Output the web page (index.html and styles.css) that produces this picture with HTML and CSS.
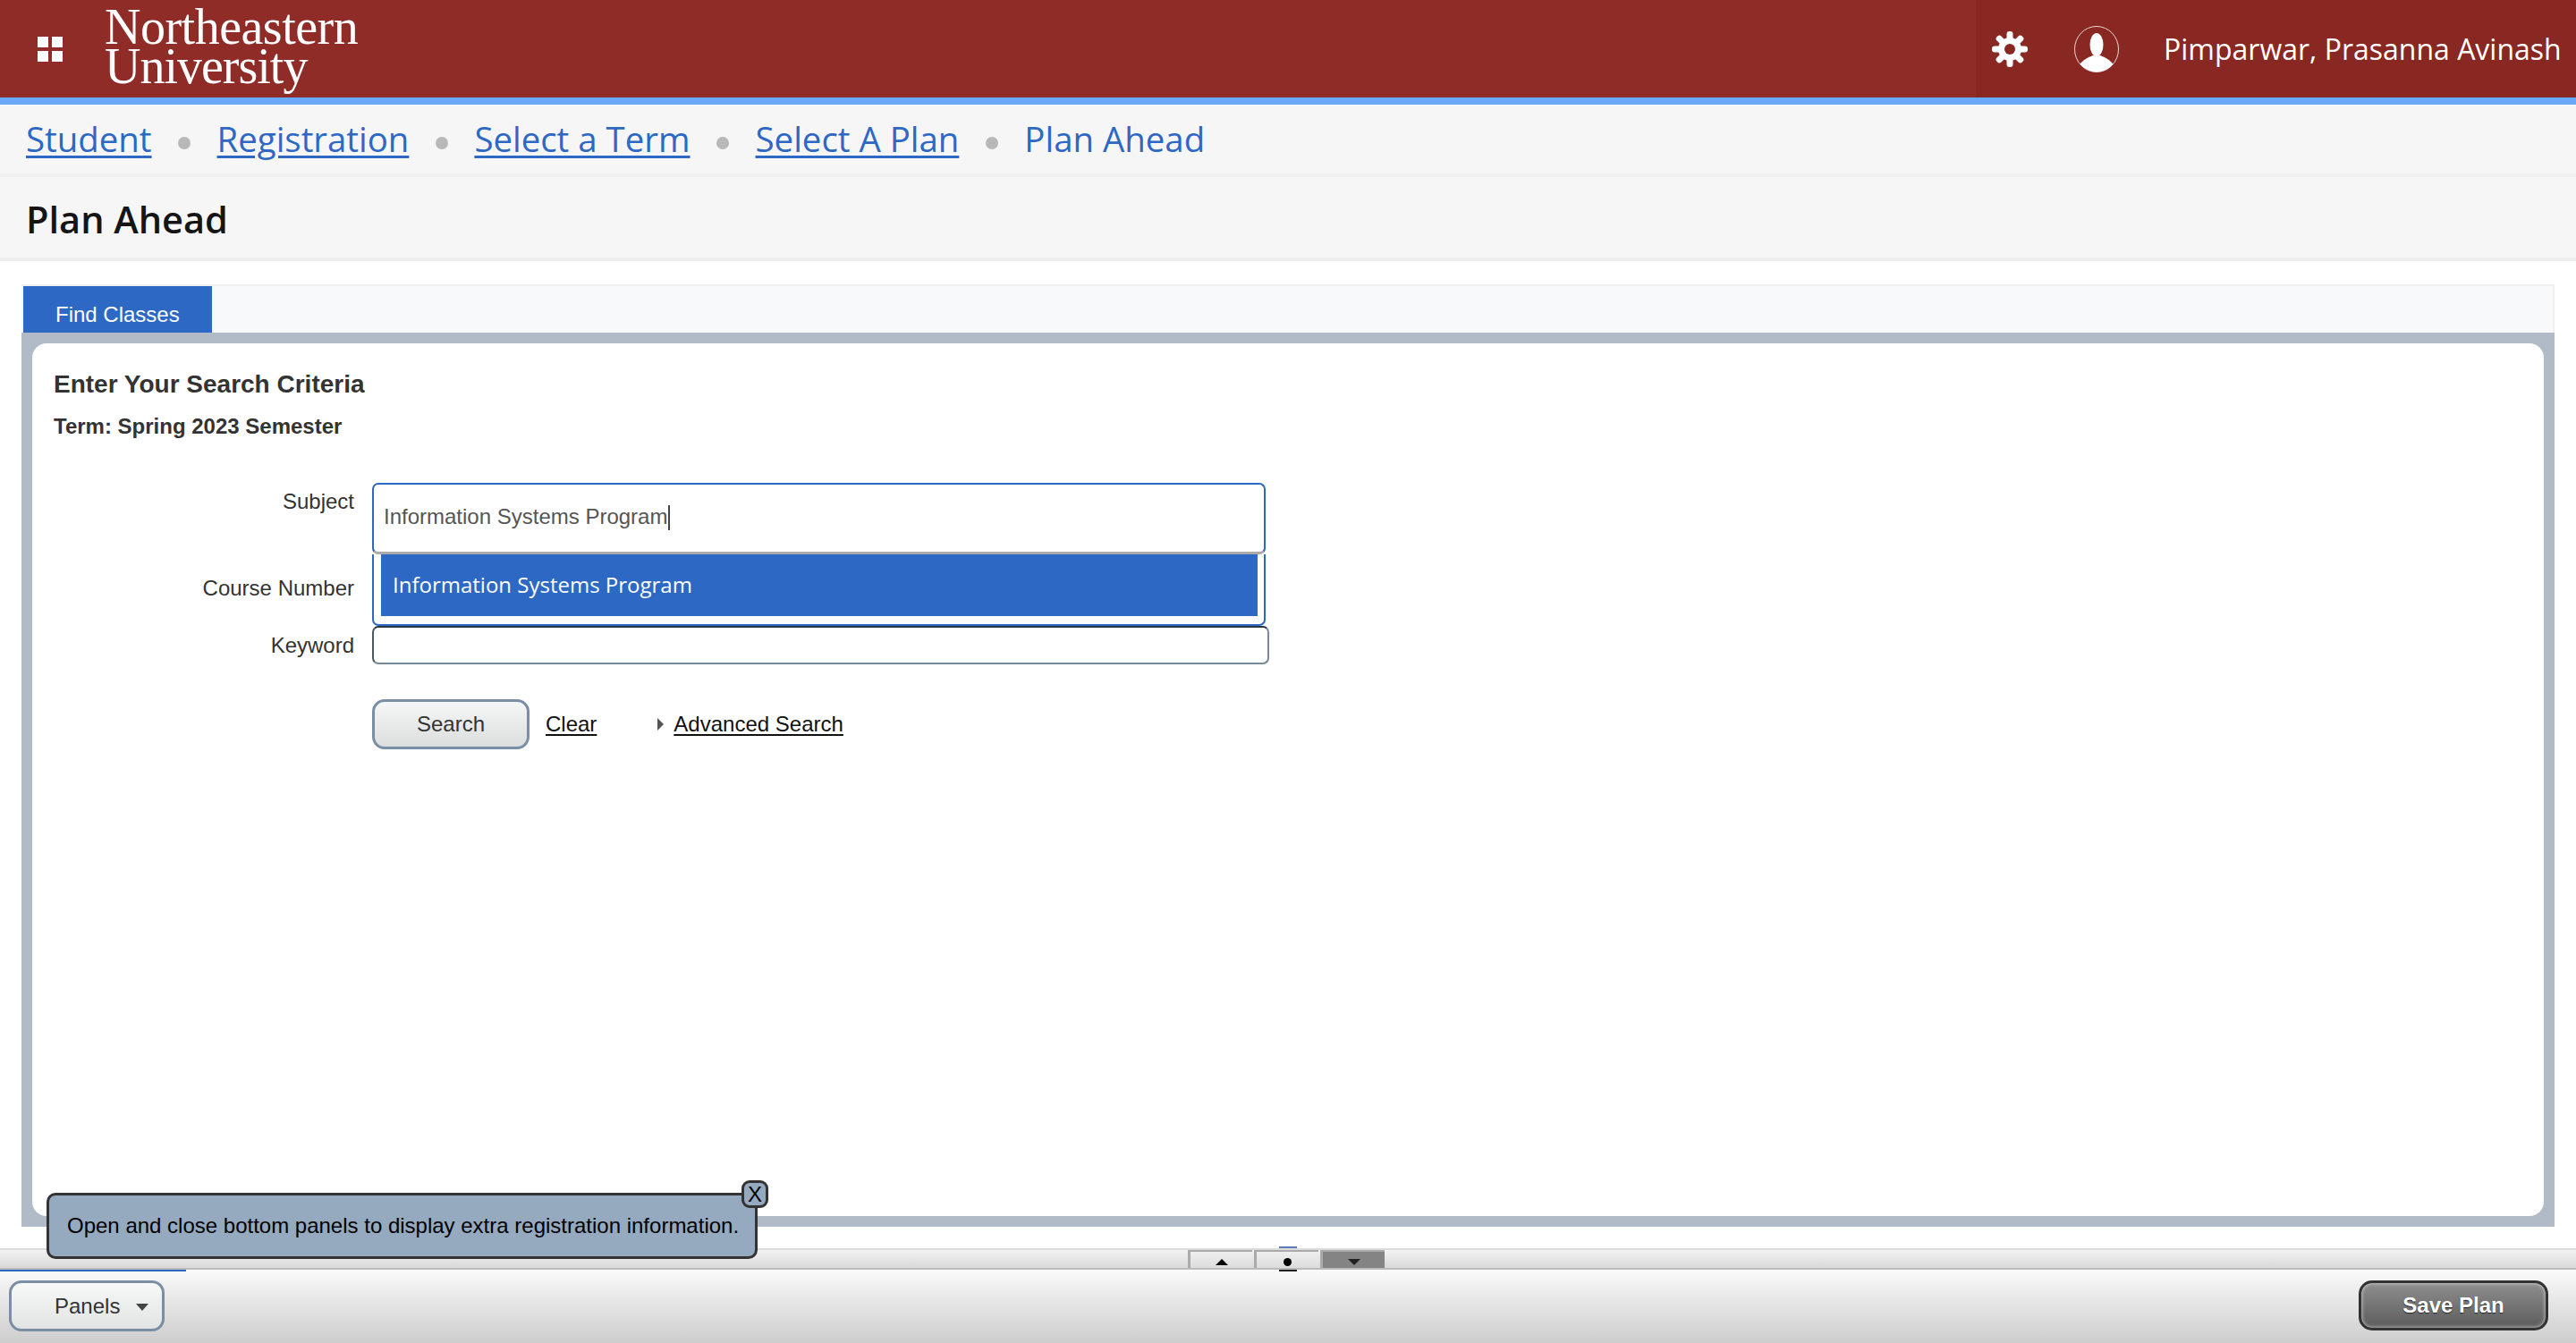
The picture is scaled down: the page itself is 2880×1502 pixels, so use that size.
FILE: index.html
```html
<!DOCTYPE html>
<html lang="en">
<head>
<meta charset="utf-8">
<title>Plan Ahead</title>
<link rel="stylesheet" href="styles.css">
</head>
<body>
<div class="page">
  <header class="topbar">
    <div class="brand">
      <svg class="grid-icon" viewBox="0 0 28 28" width="28" height="28" aria-hidden="true">
        <rect x="0" y="0" width="12" height="12"/><rect x="16" y="0" width="12" height="12"/>
        <rect x="0" y="16" width="12" height="12"/><rect x="16" y="16" width="12" height="12"/>
      </svg>
      <div class="logo"><span class="logo-first">Northeastern</span><span class="logo-second">University</span></div>
    </div>
    <div class="user">
      <svg class="gear" viewBox="0 0 40 40" width="40" height="40" aria-hidden="true">
        <g fill="#fff">
          <rect x="16.5" y="0" width="7" height="40" rx="3"/>
          <rect x="16.5" y="0" width="7" height="40" rx="3" transform="rotate(45 20 20)"/>
          <rect x="16.5" y="0" width="7" height="40" rx="3" transform="rotate(90 20 20)"/>
          <rect x="16.5" y="0" width="7" height="40" rx="3" transform="rotate(135 20 20)"/>
          <circle cx="20" cy="20" r="13"/>
        </g>
        <circle cx="20" cy="20" r="6" fill="#892722"/>
      </svg>
      <svg class="avatar" viewBox="0 0 50 52" width="50" height="52" aria-hidden="true">
        <defs><clipPath id="av"><ellipse cx="25" cy="26" rx="24.5" ry="25.5"/></clipPath></defs>
        <ellipse cx="25" cy="26" rx="24.5" ry="25.5" fill="none" stroke="#e8d6d4" stroke-width="1"/>
        <g clip-path="url(#av)" fill="#fff">
          <ellipse cx="25" cy="21" rx="7.5" ry="13"/>
          <path d="M4 52C4 40 14 36 21 33h8c7 3 17 7 17 19z"/>
        </g>
      </svg>
      <span class="user-name">Pimparwar, Prasanna Avinash</span>
    </div>
  </header>

  <nav class="crumbs">
    <a class="crumb" href="#">Student</a><i class="dot"></i>
    <a class="crumb" href="#">Registration</a><i class="dot"></i>
    <a class="crumb" href="#">Select a Term</a><i class="dot"></i>
    <a class="crumb" href="#">Select A Plan</a><i class="dot"></i>
    <span class="crumb-current">Plan Ahead</span>
  </nav>

  <div class="title-bar"><h1 class="title">Plan Ahead</h1></div>

  <main class="content">
    <div class="tabs"><div class="tab">Find Classes</div></div>
    <section class="frame">
      <div class="card">
        <h2 class="card-title">Enter Your Search Criteria</h2>
        <p class="term">Term: Spring 2023 Semester</p>
        <div class="form">
          <div class="row row-subject">
            <label class="label">Subject</label>
            <div class="combo">
              <div class="combo-input">Information Systems Program<span class="caret"></span></div>
              <div class="combo-list"><div class="combo-item">Information Systems Program</div></div>
            </div>
          </div>
          <div class="row row-course">
            <label class="label">Course Number</label>
          </div>
          <div class="row row-keyword">
            <label class="label">Keyword</label>
            <div class="field"></div>
          </div>
          <div class="row row-actions">
            <span class="label"></span>
            <button class="btn-search" type="button">Search</button>
            <a class="link link-clear" href="#">Clear</a>
            <span class="arrow"></span>
            <a class="link" href="#">Advanced Search</a>
          </div>
        </div>
      </div>
    </section>
  </main>

  <div class="panel-bar">
    <div class="toggles">
      <span class="toggle"><i class="tri-up"></i></span>
      <span class="toggle"><i class="round"></i></span>
      <span class="toggle toggle-active"><i class="tri-down"></i></span>
    </div>
    <i class="mark-top"></i>
    <i class="mark-bottom"></i>
    <i class="progress"></i>
  </div>

  <footer class="footer">
    <button class="btn-panels" type="button">Panels<i class="panels-arrow"></i></button>
    <button class="btn-save" type="button">Save Plan</button>
  </footer>

  <div class="tip">
    Open and close bottom panels to display extra registration information.
    <span class="tip-close">X</span>
  </div>
</div>
</body>
</html>
```

FILE: styles.css
```css
* { box-sizing: border-box; }
html, body { margin: 0; height: 100%; }
body { font-family: "Liberation Sans", Arial, sans-serif; color: #333; background: #fff; }
.page { position: relative; height: 1502px; display: flex; flex-direction: column; overflow: hidden; }

.topbar {
  height: 117px; flex: none; display: flex; justify-content: space-between;
  background: #8f2c28; border-bottom: 8px solid #6aa9f8;
}
.brand { display: flex; align-items: center; }
.grid-icon { fill: #fff; margin-left: 42px; margin-top: 1px; }
.logo {
  display: flex; flex-direction: column; margin-left: 47px; margin-top: -6px;
  font-family: "Liberation Serif", "Times New Roman", serif; font-size: 56px; line-height: 44px;
  color: #fff; letter-spacing: -0.5px;
}
.logo-second { letter-spacing: -1px; }
.user { width: 671px; display: flex; align-items: center; background: #892722; }
.gear { margin-left: 18px; }
.avatar { margin-left: 52px; }
.user-name { margin-left: 50px; font-family: "Open Sans", sans-serif; font-size: 32px; color: #fff; white-space: nowrap; }

.crumbs {
  height: 81px; flex: none; display: flex; align-items: center; gap: 29.5px;
  padding: 0 0 2px 29px; background: #f6f6f6; border-bottom: 4px solid #efefef;
  font-family: "Open Sans", sans-serif; font-size: 38.4px;
}
.crumb { color: #2d68c4; text-decoration: underline; text-decoration-thickness: 3px; text-underline-offset: 4px; white-space: nowrap; }
.crumb-current { color: #2d68c4; white-space: nowrap; }
.dot { width: 14px; height: 14px; margin-top: 10px; border-radius: 50%; background: #b8b8b8; }

.title-bar { height: 94px; flex: none; display: flex; align-items: center; padding: 4px 0 0 29px; background: #f6f6f6; border-bottom: 4px solid #efefef; }
.title { margin: 0; font-family: "Open Sans", sans-serif; font-size: 41.5px; font-weight: 600; color: #151515; }

.content { flex: 1; padding: 26px 24px 24px; display: flex; flex-direction: column; min-height: 0; }
.tabs { height: 54px; flex: none; padding: 0 0 0 2px; background: #f8f9fb; border: solid #efefef; border-width: 2px 2px 0 0; }
.tab {
  width: 211px; height: 52px; padding-top: 17px; padding-left: 36px; background: #2d68c4; color: #fff;
  font-size: 24px; line-height: 30px;
}
.frame { height: 1000px; flex: none; padding: 12px; background: #b0bbc7; }
.card { height: 976px; padding: 29px 24px 0; background: #fff; border-radius: 16px; }
.card-title { margin: 0; font-size: 28px; line-height: 34px; font-weight: 700; color: #333; }
.term { margin: 16px 0 0; font-size: 24px; line-height: 28px; font-weight: 700; color: #333; }

.form { margin-top: 49px; }
.row { display: flex; }
.label { flex: none; width: 336px; text-align: right; font-size: 24px; color: #333; line-height: 28px; }
.row-subject { height: 78px; gap: 20px; }
.row-subject .label { padding-top: 7px; }
.row-course { height: 82px; }
.row-course .label { padding-top: 26px; }
.row-keyword { height: 43px; gap: 20px; }
.row-keyword .label { padding-top: 8px; }
.row-actions { margin-top: 39px; height: 56px; align-items: center; gap: 20px; }

.combo { position: relative; width: 999px; height: 78px; }
.combo-input {
  height: 80px; padding: 21px 0 0 11px; border: 2px solid #2d68c4; border-bottom: 3px solid #aaa; border-radius: 7px;
  font-size: 24px; line-height: 30px; color: #555; background: #fff;
}
.caret { display: inline-block; width: 2px; height: 28px; margin-left: 1px; vertical-align: -7px; background: #444; }
.combo-list {
  position: absolute; left: 0; right: 0; top: 80px; height: 80px; padding: 0 7px 10px 8px;
  background: #fff; border: 2px solid #2d68c4; border-top: 0; border-radius: 0 0 7px 7px;
}
.combo-item {
  height: 69px; padding: 0 0 2px 13px; display: flex; align-items: center;
  background: #2d68c4; color: #fff; font-family: "Open Sans", sans-serif; font-size: 24px;
}
.field { width: 1003px; height: 43px; border: 2px solid #778899; border-top-color: #2b3540; border-left-color: #4a5866; border-radius: 7px; background: #fff; }

.btn-search {
  width: 176px; height: 56px; border: 3px solid #7a8fa6; border-radius: 14px;
  background: linear-gradient(#f5f6f6, #dcdede); font: 24px "Liberation Sans", Arial, sans-serif; color: #333;
}
.link { font-size: 24px; color: #111; text-decoration: underline; text-underline-offset: 3px; }
.link-clear { margin-left: -2px; margin-right: 48px; }
.arrow { width: 0; height: 0; margin-right: -9px; border-left: 7px solid #555; border-top: 7px solid transparent; border-bottom: 7px solid transparent; }

.panel-bar {
  position: relative; height: 24px; flex: none;
  background: linear-gradient(#f3f3f3, #d8d8d8); border-top: 2px solid #dcdcdc; border-bottom: 2px solid #bbb;
}
.toggles { position: absolute; left: 1328px; top: 0; display: flex; gap: 2px; }
.toggle {
  width: 72px; height: 20px; display: flex; align-items: center; justify-content: center; padding-top: 5px;
  border: solid #aaa; border-width: 2px 0 0 3px; background: linear-gradient(#efefef, #dcdcdc);
}
.toggle-active { background: #848484; }
.tri-up { border: 7px solid transparent; border-top: 0; border-bottom: 7px solid #000; }
.tri-down { border: 7px solid transparent; border-bottom: 0; border-top: 7px solid #222; }
.round { width: 9px; height: 9px; border-radius: 50%; background: #000; }
.mark-top { position: absolute; left: 1430px; top: -4px; width: 20px; height: 2px; background: #5b7cb5; }
.mark-bottom { position: absolute; left: 1430px; bottom: -4px; width: 20px; height: 2px; background: #222; }
.progress { position: absolute; left: 0; bottom: -4px; width: 208px; height: 2px; background: #2d68c4; }

.footer {
  height: 82px; flex: none; display: flex; justify-content: space-between; align-items: flex-start;
  padding: 12px 31px 0 10px; background: linear-gradient(#fafafa, #cdcdcd);
}
.btn-panels {
  width: 174px; height: 57px; padding: 0 0 0 48px; display: flex; align-items: center;
  border: 3px solid #7a8fa6; border-radius: 14px; background: linear-gradient(#f7f8f8, #e2e4e4);
  font: 24px "Liberation Sans", Arial, sans-serif; color: #333;
}
.panels-arrow { margin-left: 18px; margin-top: 3px; border: 7px solid transparent; border-top: 8px solid #444; border-bottom: 0; }
.btn-save {
  width: 212px; height: 56px; border: 3px solid #333; border-radius: 15px;
  background: linear-gradient(#8e8e8e, #5c5c5c); box-shadow: inset 0 0 4px #ddd;
  font: 700 24px "Liberation Sans", Arial, sans-serif; color: #fff; text-shadow: 0 1px 1px #222;
}

.tip {
  position: absolute; left: 52px; top: 1334px; width: 795px; height: 74px; padding: 0 0 0 20px;
  display: flex; align-items: center;
  background: #95a9bf; border: 3px solid #333; border-radius: 10px;
  font-size: 24px; color: #000; white-space: nowrap;
}
.tip-close {
  position: absolute; right: -15px; top: -17px; width: 30px; height: 31px; display: flex; align-items: center; justify-content: center;
  background: #95a9bf; border: 3px solid #333; border-radius: 9px; font-size: 24px;
}
```
